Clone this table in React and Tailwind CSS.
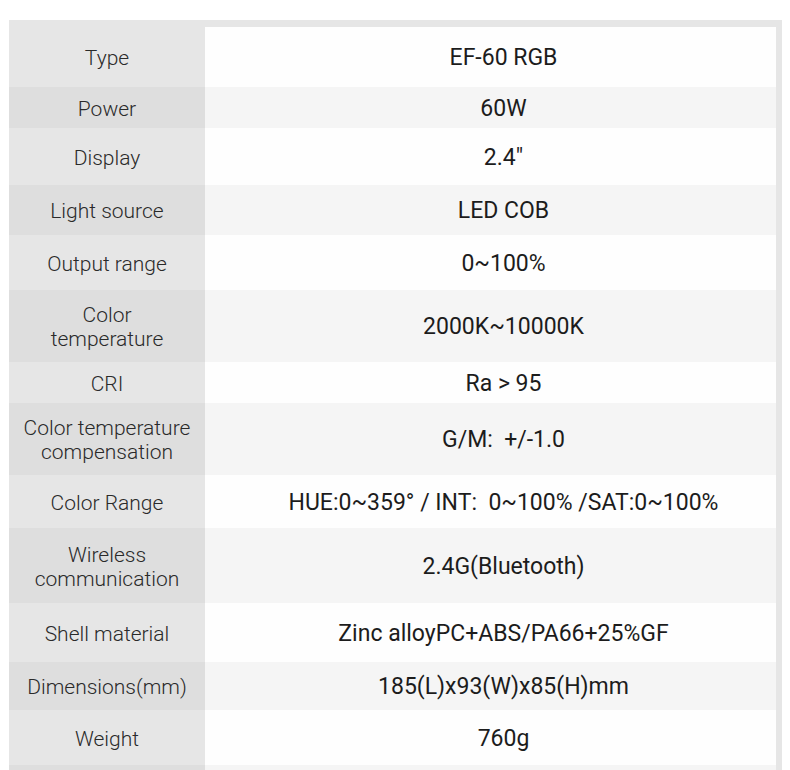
const rows = [
  { label: ["Type"], value: "EF-60 RGB", h: "h-[60px]" },
  { label: ["Power"], value: "60W", h: "h-[41px]" },
  { label: ["Display"], value: "2.4\u2033", h: "h-[57px]" },
  { label: ["Light source"], value: "LED COB", h: "h-[50px]" },
  { label: ["Output range"], value: "0~100%", h: "h-[55px]" },
  { label: ["Color", "temperature"], value: "2000K~10000K", h: "h-[72px]" },
  { label: ["CRI"], value: "Ra > 95", h: "h-[41px]" },
  {
    label: ["Color temperature", "compensation"],
    value: "G/M:\u00a0 +/-1.0",
    h: "h-[72px]",
  },
  {
    label: ["Color Range"],
    value: "HUE:0~359\u00b0 / INT:\u00a0 0~100% /SAT:0~100%",
    h: "h-[53px]",
  },
  { label: ["Wireless", "communication"], value: "2.4G(Bluetooth)", h: "h-[75px]" },
  { label: ["Shell material"], value: "Zinc alloyPC+ABS/PA66+25%GF", h: "h-[59px]" },
  { label: ["Dimensions(mm)"], value: "185(L)x93(W)x85(H)mm", h: "h-[48px]" },
  { label: ["Weight"], value: "760g", h: "h-[55px]" },
  { label: [""], value: "", h: "h-[40px]" },
];

function SpecRow({ label, value, h, shaded }) {
  return (
    <div className={"grid grid-cols-[196px_1fr] " + h}>
      <div
        className={
          "flex flex-col items-center justify-center pt-[2px] text-center font-light text-[21px] leading-[24px] text-[#2a2a2a] " +
          (shaded ? "bg-[#dedede]" : "bg-[#e6e6e6]")
        }
      >
        {label.map((l, i) => (
          <span key={i}>{l}</span>
        ))}
      </div>
      <div
        className={
          "flex items-center justify-center pl-[26px] pt-[3px] text-[23px] text-[#1c1c1c] " +
          (shaded ? "bg-[#f5f5f5]" : "bg-[#fefefe]")
        }
      >
        {value}
      </div>
    </div>
  );
}

export default function App() {
  return (
    <div
      className="w-[790px] h-[770px] overflow-hidden bg-white pt-[20px]"
      style={{ fontFamily: "Roboto, 'Noto Sans', sans-serif" }}
    >
      <div className="ml-[9px] w-[773px] bg-[#e6e6e6] pt-[7px] pr-[6px]">
        {rows.map((r, i) => (
          <SpecRow key={i} {...r} shaded={i % 2 === 1} />
        ))}
      </div>
    </div>
  );
}
